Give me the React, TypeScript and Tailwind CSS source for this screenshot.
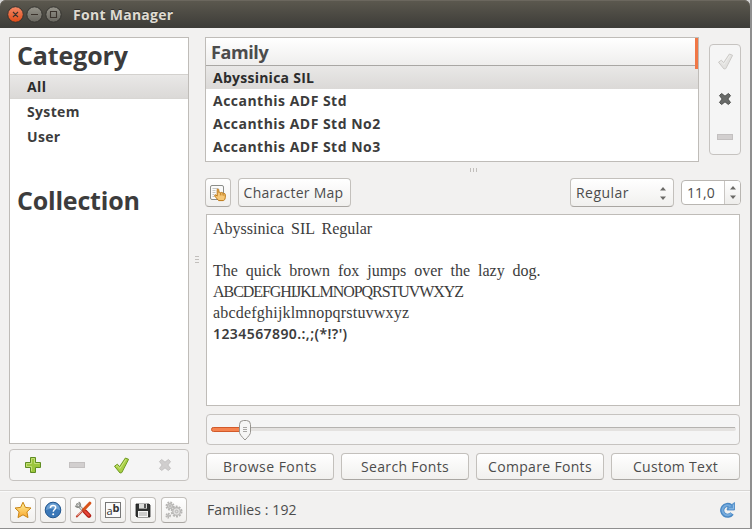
import React from 'react';

const BTN =
  'flex items-center justify-center rounded-[4px] border border-[#c3c0bc] border-b-[#a9a6a2] bg-linear-to-b from-white to-[#f1f0ee] whitespace-nowrap text-[#4c4c4c]';
const PANEL = 'border border-[#bfbcb8] bg-white';
const BAR = 'rounded-[4px] border border-[#c6c3c0] bg-[#f5f5f5]';

type IconProps = { className?: string; dim?: boolean };

function Check({ className, dim }: IconProps) {
  return (
    <svg width="17" height="17" viewBox="0 0 17 17" className={className}>
      <path
        d="M1.5 9.200 4.400 7.200 6.600 9.700 12.400 1 15.600 2.300 8.800 15.600 7 16Z"
        fill={dim ? '#e3e2e0' : '#a9d046'}
        stroke={dim ? '#cccac7' : '#6e9922'}
        strokeLinejoin="round"
      />
      <path
        d="M3 9.500 4.300 8.600 6.800 11.500 12.900 2.300"
        fill="none"
        stroke={dim ? '#eeeeec' : '#cfe785'}
        strokeWidth="1"
      />
    </svg>
  );
}

function Cross({ dim }: IconProps) {
  return (
    <svg width="14" height="14" viewBox="0 0 14 14">
      <path
        d="M3.600 1.500 7 4.200 10.400 1.500 12.500 3.600 9.800 7 12.500 10.400 10.400 12.500 7 9.800 3.600 12.500 1.500 10.400 4.200 7 1.500 3.600Z"
        fill={dim ? '#d0cece' : '#696b69'}
        stroke={dim ? '#c3c1c1' : '#4b4c4a'}
        strokeLinejoin="round"
      />
    </svg>
  );
}

function Minus() {
  return (
    <svg width="16" height="6" viewBox="0 0 16 6">
      <rect x=".5" y=".5" width="15" height="5" fill="#d2cfcf" stroke="#c3c0c0" />
    </svg>
  );
}

function Plus() {
  return (
    <svg width="16" height="16" viewBox="0 0 16 16">
      <path d="M5.5.5h5v5h5v5h-5v5h-5v-5h-5v-5h5z" fill="#9bc63c" stroke="#5f8c22" />
      <path d="M6.5 14V9.5h-5v-3h5v-5h3v5h5" fill="none" stroke="#c2de77" />
    </svg>
  );
}

function Star() {
  return (
    <svg width="18" height="18" viewBox="0 0 18 18">
      <defs>
        <linearGradient id="star" x1="0" y1="0" x2="0" y2="1">
          <stop offset="0" stopColor="#fff29a" />
          <stop offset="1" stopColor="#f9a72f" />
        </linearGradient>
      </defs>
      <path
        d="M9 1.2 11.4 6.4 17 7 12.9 10.9 14 16.6 9 13.8 4 16.6 5.1 10.9 1 7 6.6 6.4Z"
        fill="url(#star)"
        stroke="#c98414"
        strokeLinejoin="round"
      />
    </svg>
  );
}

function Help() {
  return (
    <svg width="18" height="18" viewBox="0 0 18 18">
      <circle cx="9" cy="9" r="7.8" fill="#3b78b8" stroke="#23578f" />
      <path d="M2 9a7 7 0 0 1 14 0q-7-3-14 0" fill="#6b9fd2" />
      <path d="M6.4 7c0-3.5 5.3-3.3 5.3-.4 0 1.8-2.4 2-2.4 4.1" fill="none" stroke="#fff" strokeWidth="1.5" />
      <circle cx="9.2" cy="13.2" r="1" fill="#fff" />
    </svg>
  );
}

function Tools() {
  return (
    <svg width="18" height="18" viewBox="0 0 18 18">
      <path d="M3.5 3.5 14 14.5" stroke="#8b8d89" strokeWidth="2.8" strokeLinecap="round" />
      <path d="M3.5 3.5 13 13.5" stroke="#e6e7e4" strokeWidth="1.2" />
      <path d="M1.4 4.6A3 3 0 0 0 6 5.5 3 3 0 0 0 4.6 1.3" fill="none" stroke="#8b8d89" strokeWidth="1.6" />
      <path d="M11 10.500 15 14.700" stroke="#b32016" strokeWidth="4.4" strokeLinecap="round" />
      <path d="M11.200 10.700 14.700 14.300" stroke="#e8473a" strokeWidth="2.2" strokeLinecap="round" />
      <path d="M15.8 2.2 9.500 8.800" stroke="#d8541b" strokeWidth="3" strokeLinecap="round" />
      <path d="M9 9.3 2.800 15.500" stroke="#c2402c" strokeWidth="1.8" strokeLinecap="round" />
      <path d="M8 10.100 3.500 14.600" stroke="#f3c3b8" strokeWidth=".8" />
    </svg>
  );
}

function Floppy() {
  return (
    <svg width="16" height="16" viewBox="0 0 16 16">
      <path d="M1 2h13l1 1v12H2l-1-1z" fill="#303231" stroke="#1f201f" strokeWidth=".8" />
      <rect x="4" y="1.6" width="8" height="5" fill="#dcdddb" />
      <rect x="9" y="2" width="2" height="4" fill="#555" />
      <rect x="3" y="9" width="10" height="6" fill="#f5f5f4" />
      <path d="M4 11h8M4 13h8" stroke="#a4a4a2" />
    </svg>
  );
}

function Gears() {
  return (
    <svg width="18" height="18" viewBox="0 0 18 18" fill="none" stroke="#b6b5b3">
      <circle cx="5" cy="5" r="3.6" strokeWidth="1.8" strokeDasharray="1.8 1" />
      <circle cx="5" cy="5" r="2.4" fill="#e1e0df" strokeWidth="1.1" />
      <circle cx="11.6" cy="10.5" r="5" strokeWidth="1.8" strokeDasharray="2 1.14" />
      <circle cx="11.6" cy="10.5" r="3.8" fill="#e1e0df" strokeWidth="1.2" />
      <circle cx="11.6" cy="10.5" r="1.3" />
      <circle cx="5" cy="5" r=".9" />
      <circle cx="3.2" cy="14.6" r="2.1" strokeWidth="1.4" strokeDasharray="1.5 .7" />
      <circle cx="3.2" cy="14.6" r="1.1" fill="#c9c8c6" />
    </svg>
  );
}

function Refresh() {
  return (
    <svg width="16" height="16" viewBox="0 0 16 16">
      <path d="M13 11.500A5.400 5.400 0 1 1 11.800 4" fill="none" stroke="#4a88c4" strokeWidth="4.200" />
      <path d="M8 8H15.500V.5L12.700 2.700 9 4.500Z" fill="#5b97d0" stroke="#4a88c4" strokeWidth=".8" />
      <path d="M12.500 11.300A5 5 0 1 1 11.600 4.400" fill="none" stroke="#76abdd" strokeWidth="2" />
      <path d="M10 6.800h4.500V2.600" fill="none" stroke="#8fbce6" />
    </svg>
  );
}

function PageHand() {
  return (
    <svg width="18" height="18" viewBox="0 0 18 18">
      <rect x="1.500" y="1.500" width="13" height="14" rx="1.500" fill="#fafafa" stroke="#8b8d89" />
      <path d="M3.500 4.500h6M3.500 6.500h3M3.500 8.500h3M3.500 10.500h2M3.500 12.500h2" stroke="#c4c5c2" />
      <path
        d="M8.200 5.300q1.100-.8 1.600.4v2.900q.9-1 1.600.1 1-.9 1.700.3 1-.8 1.600.5 1.300-.4 1.600 1v2.800q0 2.800-2 3.300H9.600L5.700 12q0-1.500 1.200-1.100l1.300 1.200Z"
        fill="#f6c878"
        stroke="#bd7816"
        strokeWidth="1"
      />
      <path d="M11.400 9v2.400M13.100 9.300v2.200M14.800 9.800v2" stroke="#bd7816" strokeWidth=".8" />
    </svg>
  );
}

function Arrows({ className }: IconProps) {
  return (
    <svg width="6" height="13" viewBox="0 0 6 13" className={className}>
      <path d="M0 3.5 3 0l3 3.500zM0 9.500 3 13l3-3.500z" fill="#6b6a67" />
    </svg>
  );
}

function TitleBar() {
  return (
    <header className="flex h-7 items-center rounded-t-[6px] bg-linear-to-b from-[#5c594f] to-[#3d3c38] pl-[7px] shadow-[inset_0_1px_0_#6b675e]">
      <svg width="56" height="18" viewBox="0 0 56 18" className="mt-px">
        <defs>
          <linearGradient id="close" x1="0" y1="0" x2="0" y2="1">
            <stop offset="0" stopColor="#f48a68" />
            <stop offset="1" stopColor="#df4a16" />
          </linearGradient>
          <linearGradient id="grey" x1="0" y1="0" x2="0" y2="1">
            <stop offset="0" stopColor="#96948b" />
            <stop offset="1" stopColor="#68665f" />
          </linearGradient>
        </defs>
        <circle cx="8.500" cy="8.500" r="7.800" fill="url(#close)" stroke="#34332f" />
        <circle cx="27.500" cy="8.500" r="7.700" fill="url(#grey)" stroke="#34332f" />
        <circle cx="46.500" cy="8.500" r="7.700" fill="url(#grey)" stroke="#34332f" />
        <path d="m6 6 5 5m0-5-5 5M24 8.500h7M43.500 5.500h6v6h-6z" fill="none" stroke="#3b332d" strokeWidth="1.100" />
      </svg>
      <h1 className="ml-[10px] pt-px text-[14px] leading-7 font-bold tracking-[0.28px] text-[#dfdbd2] [text-shadow:0_-1px_0_#33322f]">
        Font Manager
      </h1>
    </header>
  );
}

function Sidebar() {
  return (
    <aside className="flex w-[180px] flex-col gap-[5px]">
      <div className={`h-[407px] ${PANEL}`}>
        <h2 className="h-9 pl-[7px] text-[25px] leading-[35px] font-bold tracking-[-0.12px]">Category</h2>
        <ul className="text-[14px] leading-[25px] font-bold tracking-[0.35px]">
          <li className="h-[25px] border-y border-t-[#d3d1ce] border-b-[#d8d6d3] bg-linear-to-b from-[#e9e8e7] to-[#dbd9d7] pl-[17px] leading-[23px] text-[#2c2c2c]">
            All
          </li>
          <li className="pl-[17px]">System</li>
          <li className="pl-[17px]">User</li>
        </ul>
        <h2 className="mt-[33px] pl-[7px] text-[25px] leading-[36px] font-bold tracking-[-0.2px]">Collection</h2>
      </div>
      <div className={`grid h-8 grid-cols-4 place-items-center px-px ${BAR}`}>
        <Plus />
        <Minus />
        <Check />
        <Cross dim />
      </div>
    </aside>
  );
}

const FAMILIES = ['Accanthis ADF Std', 'Accanthis ADF Std No2', 'Accanthis ADF Std No3'];

function FamilyList() {
  return (
    <div className="flex h-[125px]">
      <div className={`relative w-[494px] overflow-hidden ${PANEL}`}>
        <div className="h-7 border-b border-[#a9a7a4] bg-linear-to-b from-white to-[#efeeed] pl-[5px] text-[18px] leading-[28px] font-bold tracking-[-0.4px] text-[#4c4c4c]">
          Family
        </div>
        <ul className="text-[14px] leading-[23px] font-bold tracking-[0.48px]">
          <li className="bg-linear-to-b from-[#e9e8e7] to-[#dbd9d7] pl-[7px] tracking-[0.25px] text-[#2c2c2c]">
            Abyssinica SIL
          </li>
          {FAMILIES.map((name) => (
            <li key={name} className="pl-[7px]">
              {name}
            </li>
          ))}
        </ul>
        <div className="absolute top-0 right-0 h-[31px] w-[3px] bg-[#f07746]" />
      </div>
      <div className={`mt-[7px] ml-[10px] flex h-[111px] w-8 flex-col items-center pt-2 ${BAR}`}>
        <Check dim />
        <div className="mt-[22px] mb-7">
          <Cross />
        </div>
        <Minus />
      </div>
    </div>
  );
}

function Toolbar() {
  return (
    <div className="flex h-[29px] items-center text-[14px]">
      <button className={`h-[29px] w-[26px] ${BTN}`}>
        <PageHand />
      </button>
      <button className={`ml-[7px] h-[29px] w-[113px] pr-[2px] tracking-[0.25px] ${BTN}`}>Character Map</button>
      <div className={`ml-[219px] h-[29px] w-[104px] ${BTN}`}>
        <span className="mr-auto ml-[5px] tracking-[0.45px]">Regular</span>
        <Arrows className="mt-[2px] mr-[7px]" />
      </div>
      <div className="ml-[7px] flex h-[25px] w-[60px] items-center overflow-hidden rounded-[4px] border border-[#b9b6b2] bg-white text-[#4c4c4c]">
        <span className="w-[42px] pl-[5px]">11,0</span>
        <span className="flex h-full flex-1 items-center justify-center border-l border-[#c9c6c3] bg-linear-to-b from-white to-[#eeedeb]">
          <Arrows />
        </span>
      </div>
    </div>
  );
}

function Preview() {
  return (
    <div
      className={`ml-px h-[192px] w-[534px] pt-[3px] pl-[6px] font-['Liberation_Serif',serif] text-[16px] leading-[21px] text-[#3c3c3c] ${PANEL}`}
    >
      <p className="[word-spacing:3px]">Abyssinica SIL Regular</p>
      <p className="mt-[21px] [word-spacing:3.9px]">The quick brown fox jumps over the lazy dog.</p>
      <p className="tracking-[-1.05px]">ABCDEFGHIJKLMNOPQRSTUVWXYZ</p>
      <p className="tracking-[0.2px]">abcdefghijklmnopqrstuvwxyz</p>
      <p className="font-['Noto_Sans',sans-serif] text-[14px] font-semibold tracking-[0.42px]">1234567890.:,;(*!?')</p>
    </div>
  );
}

function SizeSlider() {
  return (
    <div className={`mt-2 ml-px h-[31px] w-[534px] ${BAR}`}>
      <svg width="532" height="29" viewBox="0 0 532 29">
        <rect x="4" y="12" width="525" height="4" rx="2" fill="#e4e2e0" />
        <path d="M5 12.500h523" stroke="#b5b3b0" />
        <rect x="4.500" y="12.500" width="30" height="4" rx="2" fill="#f5834f" stroke="#d25a2a" />
        <path
          d="M36.500 5.500h3q4 0 4 4v8q0 2-5.500 7.500-5.500-5.500-5.500-7.500v-8q0-4 4-4z"
          fill="#f6f6f5"
          stroke="#97948f"
        />
        <path d="M36 12.500h4M36 14.500h4M36 16.500h4" stroke="#a9a7a4" />
      </svg>
    </div>
  );
}

export default function App() {
  return (
    <div className="h-[529px] w-[752px] overflow-hidden bg-[#8f8f8f] pr-[2px] pb-px font-['Open_Sans','Noto_Sans',sans-serif] text-[#3c3c3c]">
      <div className="flex h-[528px] flex-col bg-[#f2f1f0]">
        <div className="bg-[#d5d5d5]">
          <TitleBar />
        </div>
        <main className="flex h-[462px] pt-[9px] pl-[9px]">
          <Sidebar />
          <div className="flex w-4 justify-center pt-[219px]">
            <div className="flex flex-col gap-[2px]">
              <i className="h-px w-1 bg-[#c2bfbc]" />
              <i className="h-px w-1 bg-[#c2bfbc]" />
              <i className="h-px w-1 bg-[#c2bfbc]" />
            </div>
          </div>
          <section className="w-[536px]">
            <FamilyList />
            <div className="flex h-4 items-center justify-center gap-[2px]">
              <i className="h-1 w-px bg-[#c2bfbc]" />
              <i className="h-1 w-px bg-[#c2bfbc]" />
              <i className="h-1 w-px bg-[#c2bfbc]" />
            </div>
            <Toolbar />
            <div className="h-[7px]" />
            <Preview />
            <SizeSlider />
            <div className="mt-2 ml-px flex w-[534px] gap-[7px] text-[14px]">
              <button className={`h-[27px] w-32 tracking-[0.5px] ${BTN}`}>Browse Fonts</button>
              <button className={`h-[27px] w-32 tracking-[0.35px] ${BTN}`}>Search Fonts</button>
              <button className={`h-[27px] w-32 tracking-[0.32px] ${BTN}`}>Compare Fonts</button>
              <button className={`h-[27px] w-[129px] tracking-[0.28px] ${BTN}`}>Custom Text</button>
            </div>
          </section>
        </main>
        <footer className="flex h-[38px] items-center border-t border-[#d8d6d4] pl-[10px] shadow-[inset_0_1px_0_#fafafa]">
          <div className="flex gap-1">
            <button className={`size-[26px] ${BTN}`}>
              <Star />
            </button>
            <button className={`size-[26px] ${BTN}`}>
              <Help />
            </button>
            <button className={`size-[26px] ${BTN}`}>
              <Tools />
            </button>
            <button className={`size-[26px] ${BTN}`}>
              <span className="flex size-4 items-end justify-center border border-[#777] bg-[#fafafa] text-[11px] leading-[12px] text-[#333]">
                a<b className="mb-[3px]">b</b>
              </span>
            </button>
            <button className={`size-[26px] ${BTN}`}>
              <Floppy />
            </button>
            <button className={`ml-px size-[26px] ${BTN}`}>
              <Gears />
            </button>
          </div>
          <span className="ml-[20px] text-[14px] tracking-[0.12px] text-[#4c4c4c]">Families : 192</span>
          <span className="mr-[15px] ml-auto">
            <Refresh />
          </span>
        </footer>
      </div>
    </div>
  );
}
